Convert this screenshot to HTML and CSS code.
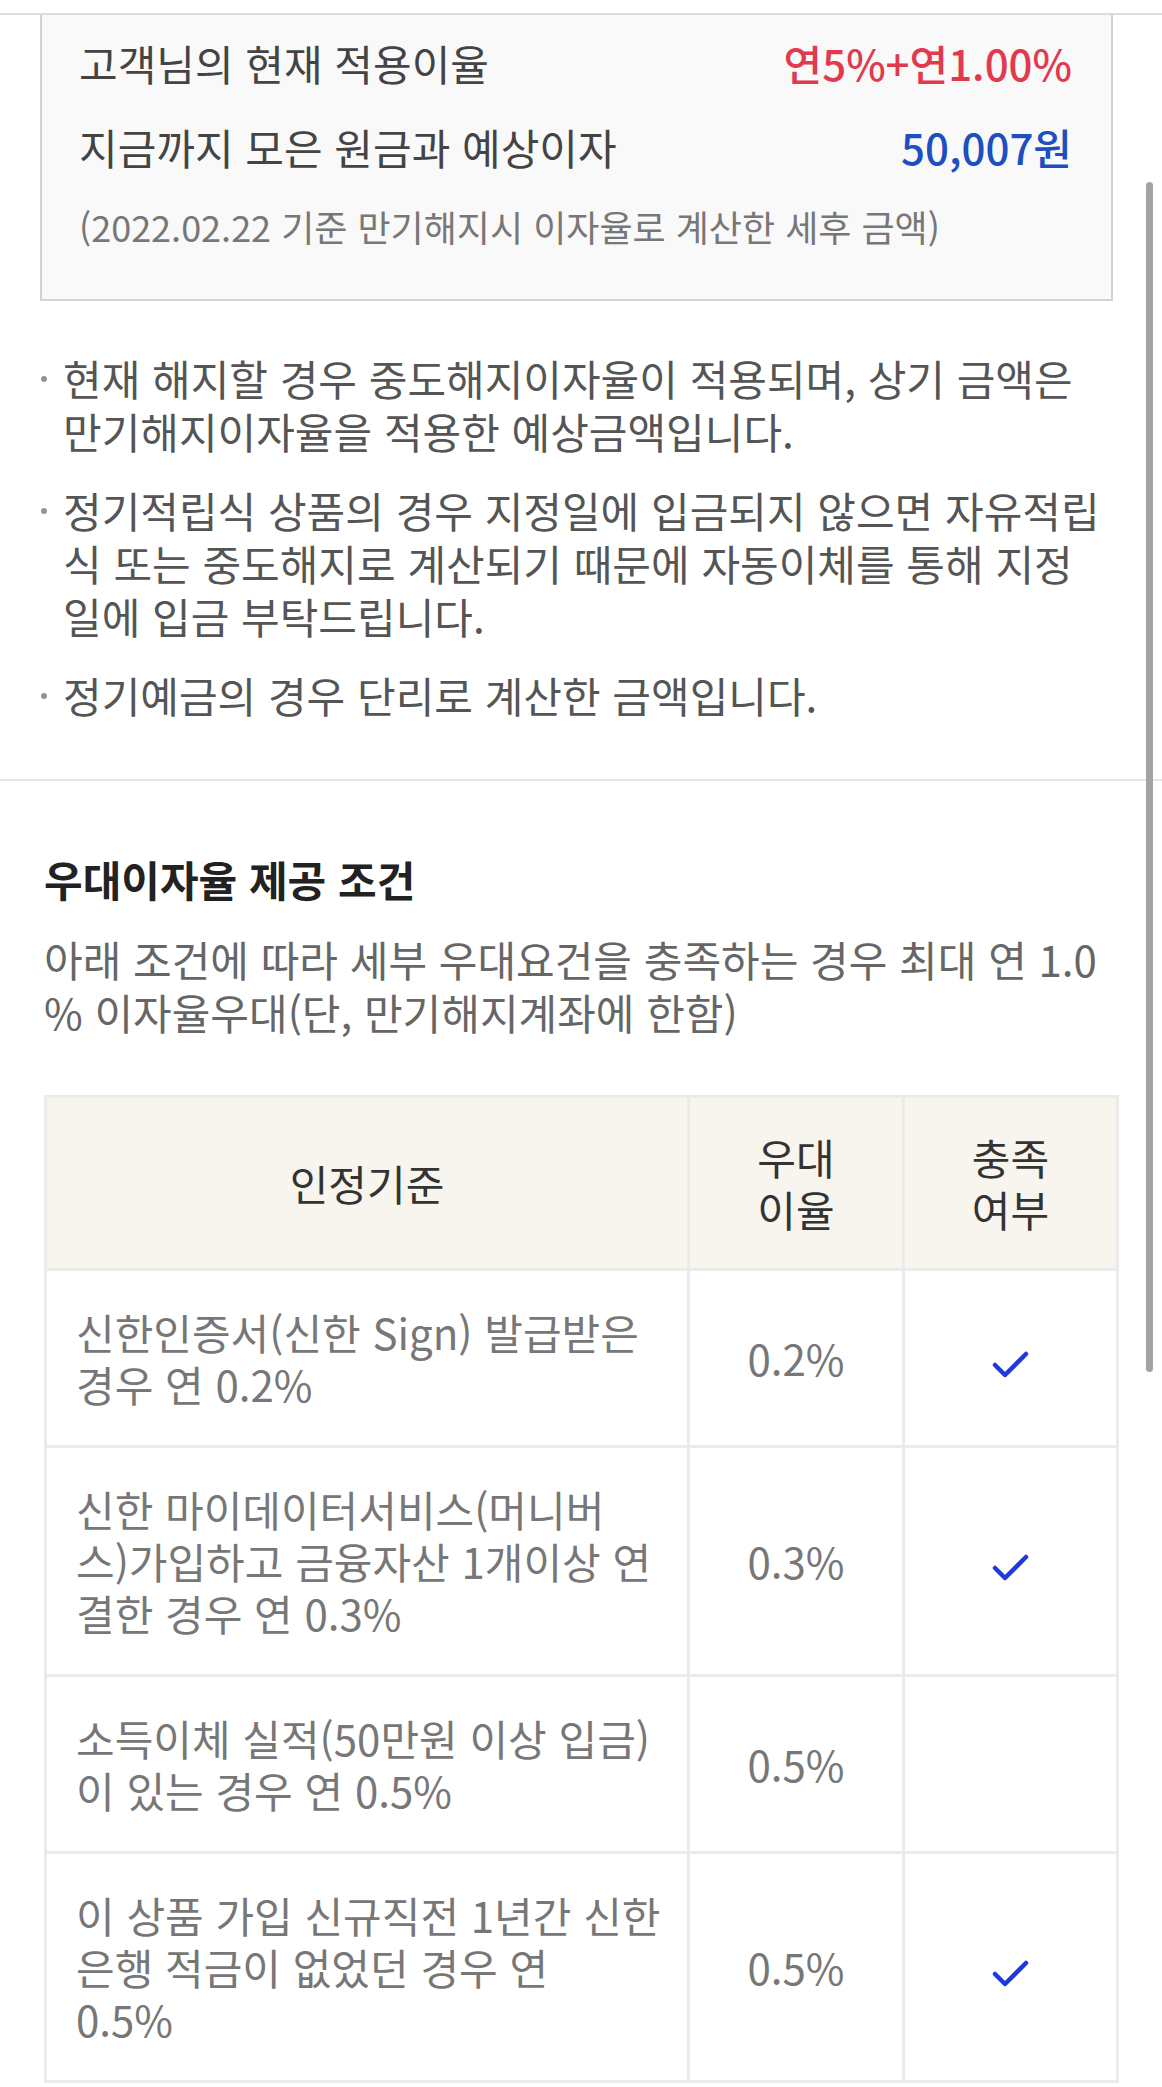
FILE: index.html
```html
<!DOCTYPE html>
<html lang="ko">
<head>
    <meta charset="UTF-8">
    <meta name="viewport" content="width=device-width, initial-scale=1.0">
    <title>우대이자율 제공 조건</title>
    <link rel="stylesheet" href="styles.css">
</head>
<body>
    <div class="page">
        <div class="topline"></div>

        <!-- 현재 적용이율 / 예상이자 -->
        <div class="summary">
            <div class="summary-row">
                <span class="label">고객님의 현재 적용이율</span>
                <span class="value rate">연5%+연1.00%</span>
            </div>
            <div class="summary-row">
                <span class="label">지금까지 모은 원금과 예상이자</span>
                <span class="value amount">50,007원</span>
            </div>
            <p class="summary-note">(2022.02.22 기준 만기해지시 이자율로 계산한 세후 금액)</p>
        </div>

        <ul class="notice">
            <li>현재 해지할 경우 중도해지이자율이 적용되며, 상기 금액은<br>만기해지이자율을 적용한 예상금액입니다.</li>
            <li>정기적립식 상품의 경우 지정일에 입금되지 않으면 자유적립<br>식 또는 중도해지로 계산되기 때문에 자동이체를 통해 지정<br>일에 입금 부탁드립니다.</li>
            <li>정기예금의 경우 단리로 계산한 금액입니다.</li>
        </ul>

        <div class="section">
            <h2 class="section-title">우대이자율 제공 조건</h2>
            <p class="desc">아래 조건에 따라 세부 우대요건을 충족하는 경우 최대 연 1.0<br>% 이자율우대(단, 만기해지계좌에 한함)</p>

            <table class="cond">
                <colgroup>
                    <col class="col-rule">
                    <col class="col-rate">
                    <col class="col-check">
                </colgroup>
                <thead>
                    <tr>
                        <th>인정기준</th>
                        <th>우대<br>이율</th>
                        <th>충족<br>여부</th>
                    </tr>
                </thead>
                <tbody>
                    <tr>
                        <td>신한인증서(신한 Sign) 발급받은<br>경우 연 0.2%</td>
                        <td class="rate-cell">0.2%</td>
                        <td class="check-cell">
                            <svg class="check" viewBox="0 0 37 27"><polyline points="3,14 13,24 34,3"/></svg>
                        </td>
                    </tr>
                    <tr>
                        <td>신한 마이데이터서비스(머니버<br>스)가입하고 금융자산 1개이상 연<br>결한 경우 연 0.3%</td>
                        <td class="rate-cell">0.3%</td>
                        <td class="check-cell">
                            <svg class="check" viewBox="0 0 37 27"><polyline points="3,14 13,24 34,3"/></svg>
                        </td>
                    </tr>
                    <tr>
                        <td>소득이체 실적(50만원 이상 입금)<br>이 있는 경우 연 0.5%</td>
                        <td class="rate-cell">0.5%</td>
                        <td class="check-cell"></td>
                    </tr>
                    <tr>
                        <td>이 상품 가입 신규직전 1년간 신한<br>은행 적금이 없었던 경우 연<br>0.5%</td>
                        <td class="rate-cell">0.5%</td>
                        <td class="check-cell">
                            <svg class="check" viewBox="0 0 37 27"><polyline points="3,14 13,24 34,3"/></svg>
                        </td>
                    </tr>
                </tbody>
            </table>
        </div>

        <div class="scrollbar"></div>
    </div>
</body>
</html>
```

FILE: styles.css
```css
* {
    box-sizing: border-box;
}

body {
    margin: 0;
    background: #ffffff;
    color: #555555;
    font-family: "Noto Sans CJK KR", "Noto Sans", sans-serif;
}

.page {
    position: relative;
    padding-top: 13px;
}

.topline {
    border-top: 2px solid #dcdcdc;
}

/* 요약 박스 */
.summary {
    margin: 0 49px 0 40px;
    padding: 20px 39px 49px 37px;
    background: #f9f9f9;
    border: 2px solid #d2d2d2;
    border-top: 0;
}
.summary-row {
    display: flex;
    justify-content: space-between;
    align-items: center;
    font-size: 42px;
    line-height: 56px;
    color: #444444;
}
.summary-row + .summary-row {
    margin-top: 28px;
}
.summary-row .value {
    font-weight: 500;
}
.rate {
    color: #e2394e;
}
.amount {
    color: #1d4fc1;
}
.summary-note {
    margin: 27px 0 0;
    font-size: 36px;
    line-height: 48px;
    color: #777777;
}

/* 안내 문구 */
.notice {
    list-style: none;
    margin: 50px 0 0;
    padding: 0 20px 58px 63px;
    border-bottom: 2px solid #e6e6e6;
    font-size: 42px;
    line-height: 53px;
    color: #555555;
}
.notice li {
    position: relative;
}
.notice li + li {
    margin-top: 26px;
}
.notice li::before {
    content: "";
    position: absolute;
    left: -22px;
    top: 25px;
    width: 6px;
    height: 6px;
    border-radius: 50%;
    background: #949494;
}

/* 우대이자율 */
.section {
    padding: 70px 44px 0;
}
.section-title {
    margin: 0;
    font-size: 42px;
    line-height: 56px;
    font-weight: 700;
    color: #222222;
}
.desc {
    margin: 25px 0 0;
    font-size: 42px;
    line-height: 53px;
    color: #666666;
}

.cond {
    width: 1072px;
    margin-top: 57px;
    table-layout: fixed;
    border-collapse: collapse;
}
.col-rule {
    width: 643px;
}
.col-rate {
    width: 215px;
}
.col-check {
    width: 214px;
}
.cond th,
.cond td {
    border: 3px solid #ebebeb;
    vertical-align: middle;
}
.cond th {
    padding: 33px 0;
    background: #f8f4ee;
    font-size: 42px;
    line-height: 52px;
    font-weight: 400;
    color: #333333;
}
.cond td {
    padding: 35px 8px 35px 29px;
    font-size: 42px;
    line-height: 52px;
    color: #777777;
}
.cond td.rate-cell,
.cond td.check-cell {
    padding: 0;
    text-align: center;
}
.check {
    display: inline-block;
    width: 37px;
    height: 27px;
    vertical-align: middle;
}
.check polyline {
    fill: none;
    stroke: #2139dc;
    stroke-width: 4.5;
    stroke-linecap: round;
    stroke-linejoin: round;
}

.scrollbar {
    position: absolute;
    top: 182px;
    right: 9px;
    width: 7px;
    height: 1190px;
    border-radius: 4px;
    background: #a3a3a3;
}
```
